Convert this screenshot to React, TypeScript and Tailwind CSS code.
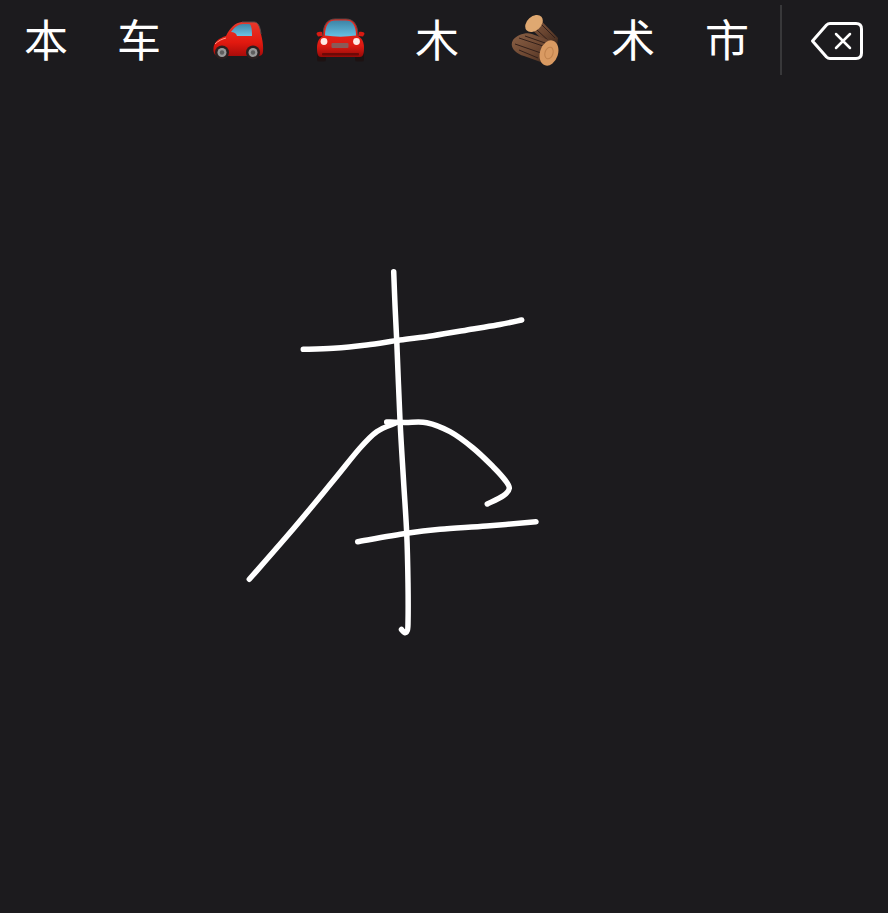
const cjk = "font-['Noto_Sans_CJK_SC',sans-serif] text-[44px] leading-none font-normal text-white pb-[4px]";

type Pt = [number, number];

// catmull-rom through the sampled pen points
function smooth(pts: Pt[]) {
    let d = `M${pts[0][0]} ${pts[0][1]}`;
    for (let i = 0; i < pts.length - 1; i++) {
        const p0 = pts[Math.max(i - 1, 0)];
        const p1 = pts[i];
        const p2 = pts[i + 1];
        const p3 = pts[Math.min(i + 2, pts.length - 1)];
        const c1x = p1[0] + (p2[0] - p0[0]) / 6;
        const c1y = p1[1] + (p2[1] - p0[1]) / 6;
        const c2x = p2[0] - (p3[0] - p1[0]) / 6;
        const c2y = p2[1] - (p3[1] - p1[1]) / 6;
        d += `C${c1x} ${c1y} ${c2x} ${c2y} ${p2[0]} ${p2[1]}`;
    }
    return d;
}

const penStrokes: Pt[][] = [
    [[393.7, 271.7], [395, 305], [396.7, 340], [400, 420], [403.5, 480], [406.7, 533], [408, 583], [408, 624], [407, 631], [404.5, 632.5], [401.5, 629.5]],
    [[303.3, 349.3], [333.3, 348.3], [366.7, 345], [400, 340], [433, 335.7], [473, 329], [500, 324.5], [521.7, 320]],
    [[249.3, 579.3], [294, 528], [333, 481], [360, 448], [376.7, 431.7], [395, 423.3]],
    [[386.7, 422], [405, 422.5], [426.7, 422.7], [450, 431.7], [473, 448], [493, 466.7], [505, 480], [509.3, 488.3], [503.3, 495.7], [487.3, 504]],
    [[357.7, 541.7], [406.7, 533.3], [440, 529.3], [486.7, 526], [536, 521.7]],
];

function SideCar() {
    return (
        <svg width="52" height="44" viewBox="212 22 52 44">
            <defs>
                <linearGradient id="sideBody" x1="0" y1="0" x2="0" y2="1">
                    <stop offset="0" stopColor="#e8392c" />
                    <stop offset="0.6" stopColor="#e2190f" />
                    <stop offset="1" stopColor="#a80c0a" />
                </linearGradient>
                <linearGradient id="sideGlass" x1="0" y1="0" x2="0" y2="1">
                    <stop offset="0" stopColor="#3f86a8" />
                    <stop offset="1" stopColor="#6cc3e4" />
                </linearGradient>
            </defs>
            <path d="M213.500 52C214 46 219 42 226 40C230 32 235 26.500 242 26L254 26C258 26 260 30 261 38C262.500 44 263.500 50 263 55C263 59 261 60 258 60L218 60C215 60 213 57 213.500 52Z" fill="url(#sideBody)" />
            <path d="M242 26L254 26C258 26 260 30 261 38" stroke="#5a4a4a" strokeWidth="1" fill="none" />
            <path d="M231 36C234 31.500 238 28.500 243 28L249 28C251 28 252 32 252 40L237 40C236 37 234 36 231 36Z" fill="url(#sideGlass)" />
            <path d="M215 48C218 45 222 43 226 42" stroke="#ff9a8a" strokeWidth="1" fill="none" />
            <circle cx="222" cy="56.500" r="7" fill="#2a2020" />
            <circle cx="222" cy="56.500" r="4.500" fill="#9a9a9a" />
            <circle cx="222" cy="56.500" r="2.200" fill="#5e5e5e" />
            <circle cx="253" cy="56.500" r="7" fill="#2a2020" />
            <circle cx="253" cy="56.500" r="4.500" fill="#9a9a9a" />
            <circle cx="253" cy="56.500" r="2.200" fill="#5e5e5e" />
        </svg>
    );
}

function FrontCar() {
    return (
        <svg width="52" height="44" viewBox="314 20 52 44">
            <defs>
                <linearGradient id="frontBody" x1="0" y1="0" x2="0" y2="1">
                    <stop offset="0" stopColor="#ee2a1e" />
                    <stop offset="0.7" stopColor="#dd1a12" />
                    <stop offset="1" stopColor="#960a08" />
                </linearGradient>
                <linearGradient id="frontGlass" x1="0" y1="0" x2="0" y2="1">
                    <stop offset="0" stopColor="#3d84a6" />
                    <stop offset="1" stopColor="#67c0e2" />
                </linearGradient>
            </defs>
            <rect x="317" y="54" width="9" height="9.500" rx="2" fill="#1d1212" />
            <rect x="355" y="54" width="9" height="9.500" rx="2" fill="#1d1212" />
            <path d="M316.500 36C316.500 34 319 33.500 322 34L323 38L318 38.500Z" fill="#d81a12" />
            <path d="M364.500 36C364.500 34 362 33.500 359 34L358 38L363 38.500Z" fill="#d81a12" />
            <path d="M323 38C323 26 328 21 335 21L346 21C353 21 358 26 358 38C362 40 364 44 364 50C364 56 363 59 360 59L321 59C318 59 317 56 317 50C317 44 319 40 323 38Z" fill="url(#frontBody)" />
            <path d="M323 38C323 26 328 21 335 21L346 21C353 21 358 26 358 38" stroke="#5a4444" strokeWidth="1" fill="none" />
            <path d="M325 37.500C325 27 329 22.500 335 22.500L346 22.500C352 22.500 356 27 356 37.500C346 39 335 39 325 37.500Z" fill="url(#frontGlass)" />
            <circle cx="324" cy="43.500" r="3.400" fill="#ffe9e4" />
            <circle cx="356.500" cy="43.500" r="3.400" fill="#ffe9e4" />
            <rect x="331.500" y="45" width="17" height="5" rx="1" fill="#8a5a58" />
            <rect x="322" y="55" width="37" height="2.500" rx="1" fill="#6d0907" />
        </svg>
    );
}

function Logs() {
    return (
        <svg width="52" height="54" viewBox="510 13 52 54">
            <defs>
                <linearGradient id="bark" x1="0" y1="0" x2="1" y2="1">
                    <stop offset="0" stopColor="#8a6045" />
                    <stop offset="0.55" stopColor="#6a4530" />
                    <stop offset="1" stopColor="#3c271c" />
                </linearGradient>
            </defs>
            <path d="M526 24L536 15.500L558 38L557 47L545 42Z" fill="url(#bark)" />
            <path d="M541 24L555 38M537 30L552 44" stroke="#33201a" strokeWidth="1" fill="none" />
            <ellipse cx="534" cy="23.500" rx="10" ry="7" transform="rotate(-42 534 23.500)" fill="#dfa871" />
            <path d="M513 40C517 35 526 32 532 34L554 42L549 65L524 56C515 53 509 47 513 40Z" fill="url(#bark)" />
            <path d="M515 44L541 53M519 38L546 47M519 50L538 58M525 36L548 44" stroke="#33201a" strokeWidth="1" fill="none" />
            <ellipse cx="549" cy="53" rx="9" ry="13" transform="rotate(18 549 53)" fill="#d99a62" />
            <ellipse cx="549" cy="53" rx="4" ry="6" transform="rotate(18 549 53)" fill="none" stroke="#c0824d" strokeWidth="1" />
        </svg>
    );
}

function Backspace() {
    return (
        <svg width="54" height="40" viewBox="809 22 54 40" fill="none" stroke="white" strokeLinecap="round" strokeLinejoin="round">
            <path d="M829 24.500L855 24.500C858.500 24.500 860.500 26.500 860.500 30L860.500 54C860.500 57.500 858.500 59.500 855 59.500L829 59.500C827.500 59.500 826.500 59 825.500 58L811.500 42L825.500 26C826.500 25 827.500 24.500 829 24.500Z" strokeWidth="3" />
            <path d="M835 35L849 49M849 35L835 49" strokeWidth="2.500" />
        </svg>
    );
}

function Strokes() {
    return (
        <svg className="block" width="888" height="833" viewBox="0 80 888 833" fill="none" stroke="white" strokeWidth="5.500" strokeLinecap="round" strokeLinejoin="round">
            {penStrokes.map((pts, i) => (
                <path key={i} d={smooth(pts)} />
            ))}
        </svg>
    );
}

export default function App() {
    return (
        <div className="w-[888px] h-[913px] overflow-hidden bg-[#1c1b1e]">
            {/* Candidate bar */}
            <div className="flex items-center h-[80px]">
                <div className={`w-[92px] text-center ${cjk}`}>本</div>
                <div className={`w-[94px] text-center ${cjk}`}>车</div>
                <div className="w-[104px] flex justify-center"><SideCar /></div>
                <div className="w-[100px] flex justify-center"><FrontCar /></div>
                <div className={`w-[94px] text-center ${cjk}`}>木</div>
                <div className="w-[104px] flex justify-center"><Logs /></div>
                <div className={`w-[90px] text-center ${cjk}`}>术</div>
                <div className={`w-[98px] text-center ${cjk}`}>市</div>
                <div className="w-[2px] h-[70px] bg-[#38383a] ml-[4px]" />
                <div className="flex-1 flex justify-center pl-[3px] pt-[2px]"><Backspace /></div>
            </div>
            {/* Handwriting area */}
            <Strokes />
        </div>
    );
}
